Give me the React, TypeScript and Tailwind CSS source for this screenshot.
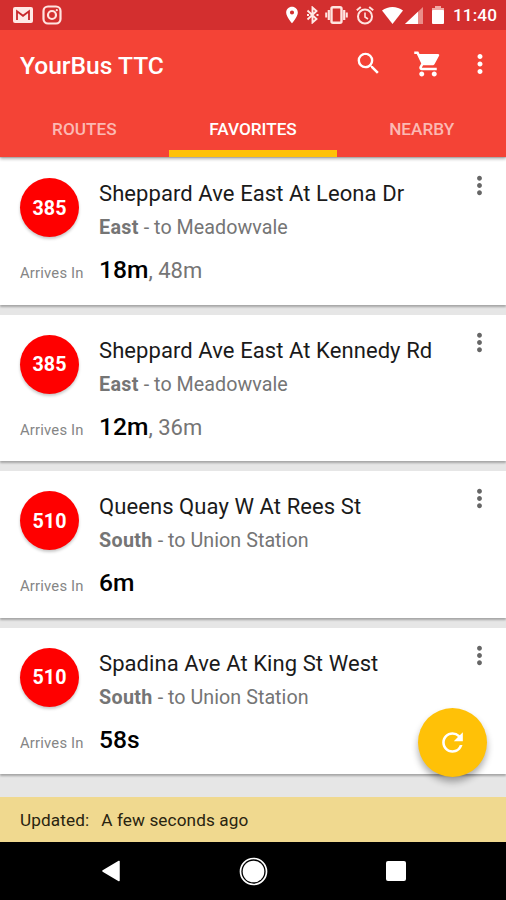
import React from "react";
import {
  MdMoreVert,
  MdPlace,
  MdRefresh,
  MdSearch,
  MdShoppingCart,
} from "react-icons/md";

type Stop = {
  route: string;
  stop: string;
  direction: string;
  destination: string;
  next: string;
  later?: string;
};

const stops: Stop[] = [
  { route: "385", stop: "Sheppard Ave East At Leona Dr", direction: "East", destination: "Meadowvale", next: "18m", later: "48m" },
  { route: "385", stop: "Sheppard Ave East At Kennedy Rd", direction: "East", destination: "Meadowvale", next: "12m", later: "36m" },
  { route: "510", stop: "Queens Quay W At Rees St", direction: "South", destination: "Union Station", next: "6m" },
  { route: "510", stop: "Spadina Ave At King St West", direction: "South", destination: "Union Station", next: "58s" },
];

function StatusBar() {
  return (
    <div className="flex h-[30px] items-center bg-[#d32f2f] pl-[13px] pr-[9px] text-white">
      <svg className="mr-[9px] h-4 w-5" viewBox="0 0 20 16" fill="none">
        <rect x="0" y="0" width="20" height="16" rx="2" fill="#ffe9e6" />
        <path d="M4 13V4.200l6 4.600 6-4.600V13" stroke="#c8282b" strokeWidth="1.800" />
      </svg>
      <svg className="h-5 w-5" viewBox="0 0 20 20" fill="none" stroke="#ffe3e0">
        <rect x="1.500" y="1.500" width="17" height="17" rx="4.500" strokeWidth="2.200" />
        <circle cx="10" cy="10" r="4" strokeWidth="2.200" />
        <circle cx="14.800" cy="5.200" r="1.100" fill="#ffe3e0" stroke="none" />
      </svg>
      <div className="ml-auto flex items-center">
        <MdPlace className="mr-[4px] size-5 -ml-1" />
        <svg className="mr-[6px] h-[18px] w-[13px]" viewBox="0 0 13 18" fill="none" stroke="#ffe9e6" strokeWidth="1.900">
          <path d="M1.500 4.500l9 8.500-4 3.500V1.500l4 3.500-9 8.500" />
          <path d="M1 9h2M10.500 9h2" />
        </svg>
        <svg className="mr-[8px] h-[18px] w-[23px]" viewBox="0 0 23 18" fill="none" stroke="#ffe3e0">
          <rect x="6.500" y="1.200" width="10" height="15.600" rx="1.500" strokeWidth="2.400" />
          <path d="M3.800 4v10M19.200 4v10" strokeWidth="2.200" />
          <path d="M1.200 6.500v5M21.800 6.500v5" strokeWidth="2" />
        </svg>
        <svg className="mr-[8px] h-[19px] w-[18px]" viewBox="0 0 18 19" fill="none" stroke="#ffe3e0" strokeWidth="2">
          <circle cx="9" cy="10.500" r="7" />
          <path d="M9 6.500v4.500l3 2" strokeWidth="1.600" />
          <path d="M0.800 4.200L4.800 1M17.200 4.200L13.200 1" />
        </svg>
        <svg className="mr-[2px] h-[17px] w-[21px]" viewBox="0 0 21 17">
          <path d="M0 3.600C6-1.200 15-1.200 21 3.600L10.500 17z" fill="white" />
        </svg>
        <svg className="mr-[9px] h-[17px] w-[18px]" viewBox="0 0 18 17">
          <path d="M0 17L18 0v17z" fill="#ea8d89" />
          <path d="M0 17L13 4.700V17z" fill="white" />
        </svg>
        <svg className="mr-[9px] h-[18px] w-3" viewBox="0 0 12 18">
          <path d="M0 2h3V0h6v2h3v4H0z" fill="#f0a9a5" />
          <rect y="4" width="12" height="14" rx="1" fill="white" />
        </svg>
        <span className="w-[44px] whitespace-nowrap pt-px text-[17.200px] font-medium leading-[29px] tracking-[0.1px]">11:40</span>
      </div>
    </div>
  );
}

function Tab({ label, active = false }: { label: string; active?: boolean }) {
  return (
    <div
      className={
        active
          ? "flex flex-1 justify-center border-b-[7px] border-[#ffc107] pt-[18px] text-white"
          : "flex flex-1 justify-center border-b-[7px] border-transparent pt-[18px] text-[#fbb9b3]"
      }
    >
      <span className="text-[17.200px] font-medium leading-5">{label}</span>
    </div>
  );
}

function StopCard({ stop }: { stop: Stop }) {
  return (
    <section className="flex h-[146.500px] shrink-0 bg-white pl-5 pr-[14px] shadow-[0_2px_2px_rgba(0,0,0,0.28)]">
      <div className="flex w-[79px] shrink-0 flex-col items-start pt-[20px]">
        <div className="flex size-[59px] items-center justify-center rounded-full bg-[#ff0000] text-[19.700px] font-bold text-white shadow-[0_2px_3px_rgba(0,0,0,0.22)]">
          <span className="pt-[2px]">{stop.route}</span>
        </div>
        <span className="mt-[26px] whitespace-nowrap text-[14.800px] leading-5 tracking-[0.200px] text-[#858585]">Arrives In</span>
      </div>
      <div className="min-w-0 flex-1 whitespace-nowrap pt-[21px]">
        <h2 className="text-[22px] leading-[30px] tracking-[0.080px] text-[#1a1a1a]">{stop.stop}</h2>
        <p className="mt-[6px] text-[19.700px] leading-[26px] tracking-[0.040px] text-[#757575]">
          <b className="font-bold tracking-[0.350px]">{stop.direction}</b> - to {stop.destination}
        </p>
        <p className="mt-[13px] text-[22px] leading-[32px] text-[#757575]">
          <span className="text-[24.600px] font-medium text-black">{stop.next}</span>
          {stop.later && <>, {stop.later}</>}
        </p>
      </div>
      <MdMoreVert className="-mr-[2px] mt-[13px] size-[29px] text-[#666]" />
    </section>
  );
}

export default function App() {
  return (
    <div className="relative flex h-[900px] w-[506px] flex-col overflow-hidden bg-[#e6e6e6] font-['Roboto',sans-serif]">
      <header className="relative z-10 shrink-0 bg-[#f44336] shadow-[0_2px_3px_rgba(0,0,0,0.3)]">
        <StatusBar />
        <div className="flex h-[69px] items-center pl-5 pr-[11px] text-white">
          <h1 className="mr-auto pt-[2px] text-[24.600px] font-medium leading-[30px]">YourBus TTC</h1>
          <MdSearch className="mb-[2px] mr-[30px] size-[29px]" />
          <MdShoppingCart className="mb-px mr-[22px] size-[30px]" />
          <MdMoreVert className="mb-px size-[30px]" />
        </div>
        <nav className="flex h-[58px] pt-[2px]">
          <Tab label="ROUTES" />
          <Tab label="FAVORITES" active />
          <Tab label="NEARBY" />
        </nav>
      </header>
      <main className="flex flex-1 flex-col gap-[10px] pt-px">
        {stops.map((stop, i) => (
          <StopCard key={i} stop={stop} />
        ))}
      </main>
      <div className="flex h-[45px] shrink-0 items-center gap-[12px] bg-[#f0d98f] pl-5 pt-[2px] text-[17.200px] tracking-[0.100px] text-[#29240f]">
        <span>Updated:</span>
        <span>A few seconds ago</span>
      </div>
      <div className="flex h-[58px] shrink-0 items-center bg-black pl-[102px]">
        <svg className="h-[22px] w-[18px]" viewBox="0 0 18 22">
          <path d="M1 11L17 1.500v19z" fill="white" stroke="white" strokeWidth="1.500" strokeLinejoin="round" />
        </svg>
        <svg className="ml-[119px] size-[29px]" viewBox="0 0 29 29">
          <circle cx="14.500" cy="14.500" r="13" fill="none" stroke="white" strokeWidth="1.700" />
          <circle cx="14.500" cy="14.500" r="10.800" fill="white" />
        </svg>
        <div className="ml-[118px] size-5 rounded-[2px] bg-white" />
      </div>
      <button className="absolute left-[418px] top-[707.500px] z-20 flex size-[69px] items-center justify-center rounded-full bg-[#ffc107] text-white shadow-[0_5px_7px_rgba(0,0,0,0.32)]">
        <MdRefresh className="size-[31px]" />
      </button>
    </div>
  );
}
